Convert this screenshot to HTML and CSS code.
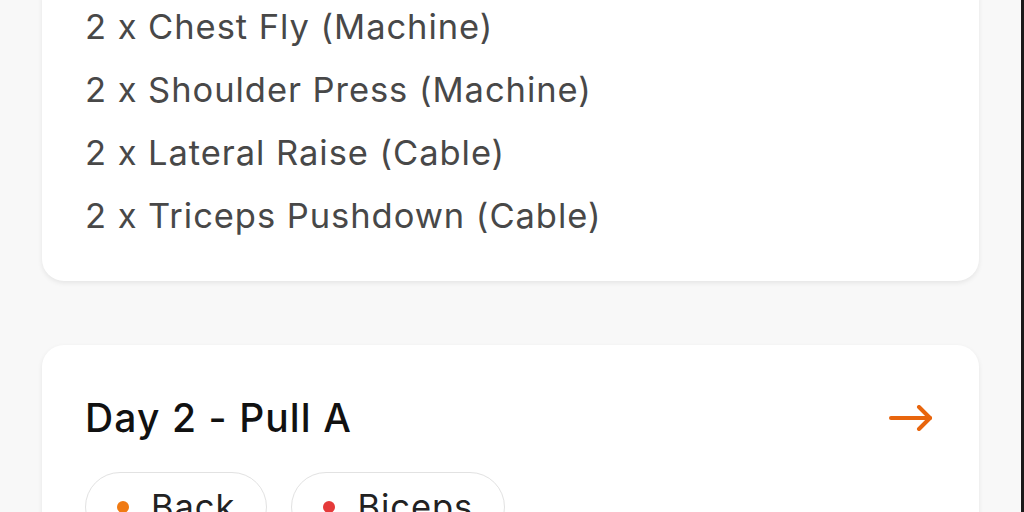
FILE: index.html
```html
<!DOCTYPE html>
<html>
<head>
<meta charset="utf-8">
<link rel="stylesheet" href="styles.css">
</head>
<body>
<div class="page">
  <section class="card card-first">
    <ul class="exercises">
      <li>2 x Chest Fly (Machine)</li>
      <li>2 x Shoulder Press (Machine)</li>
      <li>2 x Lateral Raise (Cable)</li>
      <li>2 x Triceps Pushdown (Cable)</li>
    </ul>
  </section>
  <section class="card">
    <div class="card-head">
      <h2 class="day-title">Day 2 - Pull A</h2>
      <svg class="arrow" width="44" height="26" viewBox="0 0 44 26" fill="none" stroke="#e8650d" stroke-width="4" stroke-linecap="round" stroke-linejoin="round">
        <path d="M2 13H41"/>
        <path d="M30 2L41 13L30 24"/>
      </svg>
    </div>
    <div class="tags">
      <span class="tag"><span class="dot dot-orange"></span>Back</span>
      <span class="tag"><span class="dot dot-red"></span>Biceps</span>
    </div>
  </section>
</div>
</body>
</html>
```

FILE: styles.css
```css
html, body {
  margin: 0;
  padding: 0;
}
body {
  background: #f8f8f8;
  font-family: Inter, "Noto Sans", sans-serif;
  height: 512px;
  overflow: hidden;
  border-right: 3px solid #1a1a1a;
  box-sizing: border-box;
}
.page {
  display: flex;
  flex-direction: column;
  gap: 64px;
  padding: 0 42px 0 42px;
  margin-top: -5px;
}
.card {
  background: #ffffff;
  border-radius: 22px;
  box-shadow: 0 2px 5px rgba(0, 0, 0, 0.08);
  padding: 0 47px 40px 43px;
}
.card-first {
  border-top-left-radius: 0;
  border-top-right-radius: 0;
  padding-bottom: 34px;
}
.exercises {
  list-style: none;
  margin: 0;
  padding: 0;
}
.exercises li {
  font-size: 34.5px;
  line-height: 63px;
  letter-spacing: 0.95px;
  color: #484848;
}
.card-head {
  display: flex;
  align-items: center;
  justify-content: space-between;
  padding-top: 50px;
}
.day-title {
  margin: 0;
  font-size: 39px;
  font-weight: 500;
  line-height: 45px;
  letter-spacing: 1.1px;
  color: #111111;
}
.arrow {
  display: block;
  margin-right: -1px;
}
.tags {
  display: flex;
  gap: 24px;
  margin-top: 32px;
}
.tag {
  display: flex;
  align-items: center;
  gap: 22px;
  border: 1.5px solid #e2e2e2;
  border-radius: 40px;
  padding: 12px 31px;
  font-size: 34.5px;
  line-height: 44px;
  letter-spacing: 0.95px;
  color: #222222;
}
.dot {
  width: 12px;
  height: 12px;
  border-radius: 50%;
}
.dot-orange {
  background: #f07a12;
}
.dot-red {
  background: #e53a3a;
}
```
